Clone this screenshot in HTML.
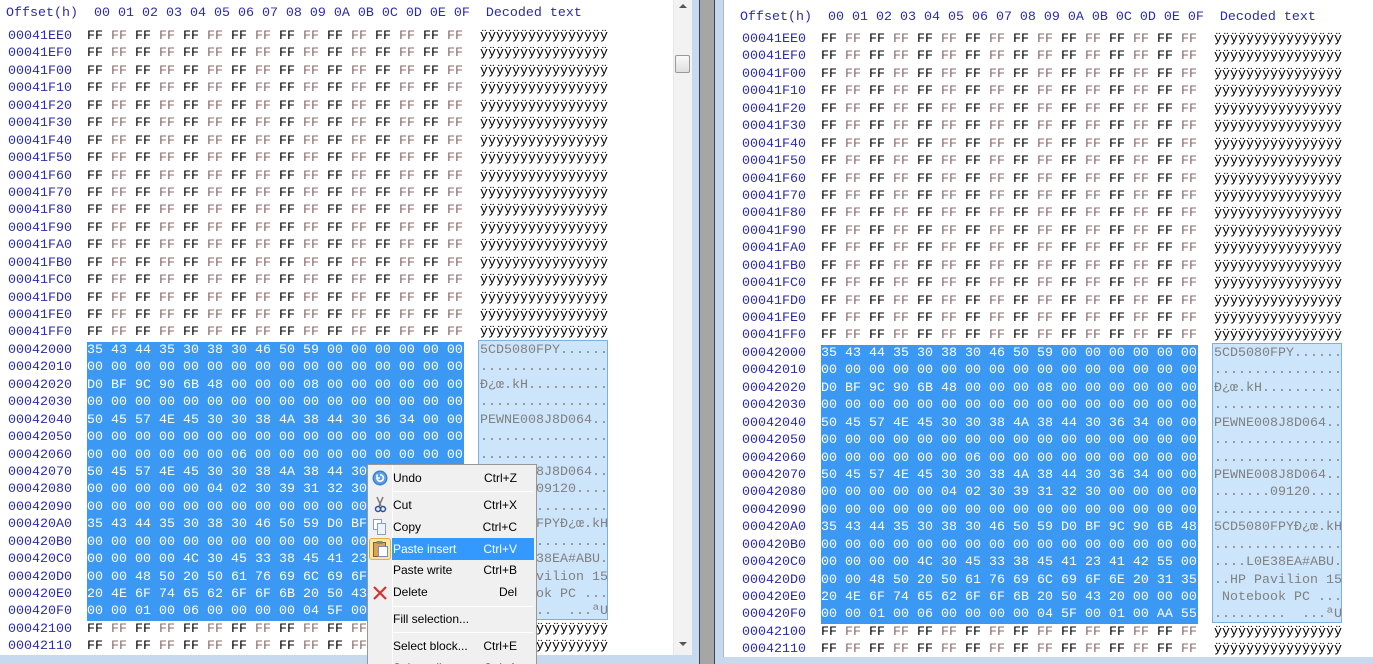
<!DOCTYPE html>
<html><head><meta charset="utf-8">
<style>
*{margin:0;padding:0;box-sizing:border-box}
html{width:1373px;height:664px;overflow:hidden}
body{width:1373px;height:664px;overflow:hidden;background:#c6d9ef;position:relative;font-family:"Liberation Mono",monospace;font-size:13.33px}
.pane{position:absolute;background:#fff;overflow:hidden}
.col{position:absolute;white-space:pre;line-height:17.43px}
.off{color:#2b2bae}
.hdr{position:absolute;white-space:pre;color:#2b2bae;line-height:17px}
.hex i{font-style:normal;color:#8a6a6a}
.hex .s{background:#3b99f4;color:#fff;width:377px;display:block}
.hex .s i{color:#fff}
.dec .s{color:#808080}
.box{position:absolute;background:#cde5fb;border:1px solid #7ab0e6}
.menu{position:absolute;left:367px;top:464px;width:170px;height:200px;overflow:hidden;background:#f0f0f0;border:1px solid #979797;border-bottom:none;font-family:"Liberation Sans",sans-serif;font-size:12px;color:#000}
.mi{position:absolute;left:25px;width:140px;height:21px;line-height:21px;padding-left:0}
.mi span{position:absolute;right:16px;top:0}
.sep{position:absolute;left:24px;width:142px;height:1px;background:#c8c8c8;border-bottom:1px solid #fff}
</style></head><body>

<!-- LEFT PANE -->
<div class="pane" style="left:0;top:0;width:673px;height:655px">
<div style="position:absolute;left:0;top:2px;width:673px;height:660px">
<div class="hdr" style="left:6px;top:3px">Offset(h)  00 01 02 03 04 05 06 07 08 09 0A 0B 0C 0D 0E 0F  Decoded text</div>
<div class="box" style="left:478px;top:338px;width:130px;height:280px"></div>
<div class="col off" style="left:8px;top:26px">00041EE0
00041EF0
00041F00
00041F10
00041F20
00041F30
00041F40
00041F50
00041F60
00041F70
00041F80
00041F90
00041FA0
00041FB0
00041FC0
00041FD0
00041FE0
00041FF0
00042000
00042010
00042020
00042030
00042040
00042050
00042060
00042070
00042080
00042090
000420A0
000420B0
000420C0
000420D0
000420E0
000420F0
00042100
00042110</div>
<div class="col hex" style="left:87px;top:26px">FF <i>FF</i> FF <i>FF</i> FF <i>FF</i> FF <i>FF</i> FF <i>FF</i> FF <i>FF</i> FF <i>FF</i> FF <i>FF</i>
FF <i>FF</i> FF <i>FF</i> FF <i>FF</i> FF <i>FF</i> FF <i>FF</i> FF <i>FF</i> FF <i>FF</i> FF <i>FF</i>
FF <i>FF</i> FF <i>FF</i> FF <i>FF</i> FF <i>FF</i> FF <i>FF</i> FF <i>FF</i> FF <i>FF</i> FF <i>FF</i>
FF <i>FF</i> FF <i>FF</i> FF <i>FF</i> FF <i>FF</i> FF <i>FF</i> FF <i>FF</i> FF <i>FF</i> FF <i>FF</i>
FF <i>FF</i> FF <i>FF</i> FF <i>FF</i> FF <i>FF</i> FF <i>FF</i> FF <i>FF</i> FF <i>FF</i> FF <i>FF</i>
FF <i>FF</i> FF <i>FF</i> FF <i>FF</i> FF <i>FF</i> FF <i>FF</i> FF <i>FF</i> FF <i>FF</i> FF <i>FF</i>
FF <i>FF</i> FF <i>FF</i> FF <i>FF</i> FF <i>FF</i> FF <i>FF</i> FF <i>FF</i> FF <i>FF</i> FF <i>FF</i>
FF <i>FF</i> FF <i>FF</i> FF <i>FF</i> FF <i>FF</i> FF <i>FF</i> FF <i>FF</i> FF <i>FF</i> FF <i>FF</i>
FF <i>FF</i> FF <i>FF</i> FF <i>FF</i> FF <i>FF</i> FF <i>FF</i> FF <i>FF</i> FF <i>FF</i> FF <i>FF</i>
FF <i>FF</i> FF <i>FF</i> FF <i>FF</i> FF <i>FF</i> FF <i>FF</i> FF <i>FF</i> FF <i>FF</i> FF <i>FF</i>
FF <i>FF</i> FF <i>FF</i> FF <i>FF</i> FF <i>FF</i> FF <i>FF</i> FF <i>FF</i> FF <i>FF</i> FF <i>FF</i>
FF <i>FF</i> FF <i>FF</i> FF <i>FF</i> FF <i>FF</i> FF <i>FF</i> FF <i>FF</i> FF <i>FF</i> FF <i>FF</i>
FF <i>FF</i> FF <i>FF</i> FF <i>FF</i> FF <i>FF</i> FF <i>FF</i> FF <i>FF</i> FF <i>FF</i> FF <i>FF</i>
FF <i>FF</i> FF <i>FF</i> FF <i>FF</i> FF <i>FF</i> FF <i>FF</i> FF <i>FF</i> FF <i>FF</i> FF <i>FF</i>
FF <i>FF</i> FF <i>FF</i> FF <i>FF</i> FF <i>FF</i> FF <i>FF</i> FF <i>FF</i> FF <i>FF</i> FF <i>FF</i>
FF <i>FF</i> FF <i>FF</i> FF <i>FF</i> FF <i>FF</i> FF <i>FF</i> FF <i>FF</i> FF <i>FF</i> FF <i>FF</i>
FF <i>FF</i> FF <i>FF</i> FF <i>FF</i> FF <i>FF</i> FF <i>FF</i> FF <i>FF</i> FF <i>FF</i> FF <i>FF</i>
FF <i>FF</i> FF <i>FF</i> FF <i>FF</i> FF <i>FF</i> FF <i>FF</i> FF <i>FF</i> FF <i>FF</i> FF <i>FF</i>
<b class="s" style="font-weight:normal">35 43 44 35 30 38 30 46 50 59 00 00 00 00 00 00
00 00 00 00 00 00 00 00 00 00 00 00 00 00 00 00
D0 BF 9C 90 6B 48 00 00 00 08 00 00 00 00 00 00
00 00 00 00 00 00 00 00 00 00 00 00 00 00 00 00
50 45 57 4E 45 30 30 38 4A 38 44 30 36 34 00 00
00 00 00 00 00 00 00 00 00 00 00 00 00 00 00 00
00 00 00 00 00 00 06 00 00 00 00 00 00 00 00 00
50 45 57 4E 45 30 30 38 4A 38 44 30 36 34 00 00
00 00 00 00 00 04 02 30 39 31 32 30 00 00 00 00
00 00 00 00 00 00 00 00 00 00 00 00 00 00 00 00
35 43 44 35 30 38 30 46 50 59 D0 BF 9C 90 6B 48
00 00 00 00 00 00 00 00 00 00 00 00 00 00 00 00
00 00 00 00 4C 30 45 33 38 45 41 23 41 42 55 00
00 00 48 50 20 50 61 76 69 6C 69 6F 6E 20 31 35
20 4E 6F 74 65 62 6F 6F 6B 20 50 43 20 00 00 00
00 00 01 00 06 00 00 00 00 04 5F 00 01 00 AA 55</b>FF <i>FF</i> FF <i>FF</i> FF <i>FF</i> FF <i>FF</i> FF <i>FF</i> FF <i>FF</i> FF <i>FF</i> FF <i>FF</i>
FF <i>FF</i> FF <i>FF</i> FF <i>FF</i> FF <i>FF</i> FF <i>FF</i> FF <i>FF</i> FF <i>FF</i> FF <i>FF</i></div>
<div class="col dec" style="left:480px;top:26px">ÿÿÿÿÿÿÿÿÿÿÿÿÿÿÿÿ
ÿÿÿÿÿÿÿÿÿÿÿÿÿÿÿÿ
ÿÿÿÿÿÿÿÿÿÿÿÿÿÿÿÿ
ÿÿÿÿÿÿÿÿÿÿÿÿÿÿÿÿ
ÿÿÿÿÿÿÿÿÿÿÿÿÿÿÿÿ
ÿÿÿÿÿÿÿÿÿÿÿÿÿÿÿÿ
ÿÿÿÿÿÿÿÿÿÿÿÿÿÿÿÿ
ÿÿÿÿÿÿÿÿÿÿÿÿÿÿÿÿ
ÿÿÿÿÿÿÿÿÿÿÿÿÿÿÿÿ
ÿÿÿÿÿÿÿÿÿÿÿÿÿÿÿÿ
ÿÿÿÿÿÿÿÿÿÿÿÿÿÿÿÿ
ÿÿÿÿÿÿÿÿÿÿÿÿÿÿÿÿ
ÿÿÿÿÿÿÿÿÿÿÿÿÿÿÿÿ
ÿÿÿÿÿÿÿÿÿÿÿÿÿÿÿÿ
ÿÿÿÿÿÿÿÿÿÿÿÿÿÿÿÿ
ÿÿÿÿÿÿÿÿÿÿÿÿÿÿÿÿ
ÿÿÿÿÿÿÿÿÿÿÿÿÿÿÿÿ
ÿÿÿÿÿÿÿÿÿÿÿÿÿÿÿÿ
<span class="s">5CD5080FPY......
................
Ð¿œ.kH..........
................
PEWNE008J8D064..
................
................
PEWNE008J8D064..
.......09120....
................
5CD5080FPYÐ¿œ.kH
................
....L0E38EA#ABU.
..HP Pavilion 15
 Notebook PC ...
.........  ...ªU</span>
ÿÿÿÿÿÿÿÿÿÿÿÿÿÿÿÿ
ÿÿÿÿÿÿÿÿÿÿÿÿÿÿÿÿ</div>
</div>
</div>

<!-- left scrollbar -->
<div style="position:absolute;left:673px;top:0;width:19px;height:655px;background:#f2f2f2;border-left:1px solid #e8e8e8"></div>
<div style="position:absolute;left:679px;top:4px;width:0;height:0;border-left:4px solid transparent;border-right:4px solid transparent;border-bottom:4px solid #555"></div>
<div style="position:absolute;left:675px;top:55px;width:15px;height:18px;background:linear-gradient(#fafafa,#dedede);border:1px solid #9a9a9a;border-radius:2px"></div>
<div style="position:absolute;left:679px;top:642px;width:0;height:0;border-left:4px solid transparent;border-right:4px solid transparent;border-top:4px solid #555"></div>

<!-- splitter -->
<div style="position:absolute;left:699px;top:0;width:16px;height:664px;background:#a6a6a6;border-left:1px solid #3a4656;border-right:1px solid #3a4656"></div>

<!-- RIGHT PANE -->
<div class="pane" style="left:723px;top:0;width:650px;height:657px;border-left:1px solid #aab8c8">
<div style="position:absolute;left:10px;top:5px;width:660px;height:660px">
<div class="hdr" style="left:6px;top:4px;position:absolute">Offset(h)  00 01 02 03 04 05 06 07 08 09 0A 0B 0C 0D 0E 0F  Decoded text</div>
<div class="box" style="left:478px;top:338px;width:130px;height:280px"></div>
<div class="col off" style="left:8px;top:26px">00041EE0
00041EF0
00041F00
00041F10
00041F20
00041F30
00041F40
00041F50
00041F60
00041F70
00041F80
00041F90
00041FA0
00041FB0
00041FC0
00041FD0
00041FE0
00041FF0
00042000
00042010
00042020
00042030
00042040
00042050
00042060
00042070
00042080
00042090
000420A0
000420B0
000420C0
000420D0
000420E0
000420F0
00042100
00042110</div>
<div class="col hex" style="left:87px;top:26px">FF <i>FF</i> FF <i>FF</i> FF <i>FF</i> FF <i>FF</i> FF <i>FF</i> FF <i>FF</i> FF <i>FF</i> FF <i>FF</i>
FF <i>FF</i> FF <i>FF</i> FF <i>FF</i> FF <i>FF</i> FF <i>FF</i> FF <i>FF</i> FF <i>FF</i> FF <i>FF</i>
FF <i>FF</i> FF <i>FF</i> FF <i>FF</i> FF <i>FF</i> FF <i>FF</i> FF <i>FF</i> FF <i>FF</i> FF <i>FF</i>
FF <i>FF</i> FF <i>FF</i> FF <i>FF</i> FF <i>FF</i> FF <i>FF</i> FF <i>FF</i> FF <i>FF</i> FF <i>FF</i>
FF <i>FF</i> FF <i>FF</i> FF <i>FF</i> FF <i>FF</i> FF <i>FF</i> FF <i>FF</i> FF <i>FF</i> FF <i>FF</i>
FF <i>FF</i> FF <i>FF</i> FF <i>FF</i> FF <i>FF</i> FF <i>FF</i> FF <i>FF</i> FF <i>FF</i> FF <i>FF</i>
FF <i>FF</i> FF <i>FF</i> FF <i>FF</i> FF <i>FF</i> FF <i>FF</i> FF <i>FF</i> FF <i>FF</i> FF <i>FF</i>
FF <i>FF</i> FF <i>FF</i> FF <i>FF</i> FF <i>FF</i> FF <i>FF</i> FF <i>FF</i> FF <i>FF</i> FF <i>FF</i>
FF <i>FF</i> FF <i>FF</i> FF <i>FF</i> FF <i>FF</i> FF <i>FF</i> FF <i>FF</i> FF <i>FF</i> FF <i>FF</i>
FF <i>FF</i> FF <i>FF</i> FF <i>FF</i> FF <i>FF</i> FF <i>FF</i> FF <i>FF</i> FF <i>FF</i> FF <i>FF</i>
FF <i>FF</i> FF <i>FF</i> FF <i>FF</i> FF <i>FF</i> FF <i>FF</i> FF <i>FF</i> FF <i>FF</i> FF <i>FF</i>
FF <i>FF</i> FF <i>FF</i> FF <i>FF</i> FF <i>FF</i> FF <i>FF</i> FF <i>FF</i> FF <i>FF</i> FF <i>FF</i>
FF <i>FF</i> FF <i>FF</i> FF <i>FF</i> FF <i>FF</i> FF <i>FF</i> FF <i>FF</i> FF <i>FF</i> FF <i>FF</i>
FF <i>FF</i> FF <i>FF</i> FF <i>FF</i> FF <i>FF</i> FF <i>FF</i> FF <i>FF</i> FF <i>FF</i> FF <i>FF</i>
FF <i>FF</i> FF <i>FF</i> FF <i>FF</i> FF <i>FF</i> FF <i>FF</i> FF <i>FF</i> FF <i>FF</i> FF <i>FF</i>
FF <i>FF</i> FF <i>FF</i> FF <i>FF</i> FF <i>FF</i> FF <i>FF</i> FF <i>FF</i> FF <i>FF</i> FF <i>FF</i>
FF <i>FF</i> FF <i>FF</i> FF <i>FF</i> FF <i>FF</i> FF <i>FF</i> FF <i>FF</i> FF <i>FF</i> FF <i>FF</i>
FF <i>FF</i> FF <i>FF</i> FF <i>FF</i> FF <i>FF</i> FF <i>FF</i> FF <i>FF</i> FF <i>FF</i> FF <i>FF</i>
<b class="s" style="font-weight:normal">35 43 44 35 30 38 30 46 50 59 00 00 00 00 00 00
00 00 00 00 00 00 00 00 00 00 00 00 00 00 00 00
D0 BF 9C 90 6B 48 00 00 00 08 00 00 00 00 00 00
00 00 00 00 00 00 00 00 00 00 00 00 00 00 00 00
50 45 57 4E 45 30 30 38 4A 38 44 30 36 34 00 00
00 00 00 00 00 00 00 00 00 00 00 00 00 00 00 00
00 00 00 00 00 00 06 00 00 00 00 00 00 00 00 00
50 45 57 4E 45 30 30 38 4A 38 44 30 36 34 00 00
00 00 00 00 00 04 02 30 39 31 32 30 00 00 00 00
00 00 00 00 00 00 00 00 00 00 00 00 00 00 00 00
35 43 44 35 30 38 30 46 50 59 D0 BF 9C 90 6B 48
00 00 00 00 00 00 00 00 00 00 00 00 00 00 00 00
00 00 00 00 4C 30 45 33 38 45 41 23 41 42 55 00
00 00 48 50 20 50 61 76 69 6C 69 6F 6E 20 31 35
20 4E 6F 74 65 62 6F 6F 6B 20 50 43 20 00 00 00
00 00 01 00 06 00 00 00 00 04 5F 00 01 00 AA 55</b>FF <i>FF</i> FF <i>FF</i> FF <i>FF</i> FF <i>FF</i> FF <i>FF</i> FF <i>FF</i> FF <i>FF</i> FF <i>FF</i>
FF <i>FF</i> FF <i>FF</i> FF <i>FF</i> FF <i>FF</i> FF <i>FF</i> FF <i>FF</i> FF <i>FF</i> FF <i>FF</i></div>
<div class="col dec" style="left:480px;top:26px">ÿÿÿÿÿÿÿÿÿÿÿÿÿÿÿÿ
ÿÿÿÿÿÿÿÿÿÿÿÿÿÿÿÿ
ÿÿÿÿÿÿÿÿÿÿÿÿÿÿÿÿ
ÿÿÿÿÿÿÿÿÿÿÿÿÿÿÿÿ
ÿÿÿÿÿÿÿÿÿÿÿÿÿÿÿÿ
ÿÿÿÿÿÿÿÿÿÿÿÿÿÿÿÿ
ÿÿÿÿÿÿÿÿÿÿÿÿÿÿÿÿ
ÿÿÿÿÿÿÿÿÿÿÿÿÿÿÿÿ
ÿÿÿÿÿÿÿÿÿÿÿÿÿÿÿÿ
ÿÿÿÿÿÿÿÿÿÿÿÿÿÿÿÿ
ÿÿÿÿÿÿÿÿÿÿÿÿÿÿÿÿ
ÿÿÿÿÿÿÿÿÿÿÿÿÿÿÿÿ
ÿÿÿÿÿÿÿÿÿÿÿÿÿÿÿÿ
ÿÿÿÿÿÿÿÿÿÿÿÿÿÿÿÿ
ÿÿÿÿÿÿÿÿÿÿÿÿÿÿÿÿ
ÿÿÿÿÿÿÿÿÿÿÿÿÿÿÿÿ
ÿÿÿÿÿÿÿÿÿÿÿÿÿÿÿÿ
ÿÿÿÿÿÿÿÿÿÿÿÿÿÿÿÿ
<span class="s">5CD5080FPY......
................
Ð¿œ.kH..........
................
PEWNE008J8D064..
................
................
PEWNE008J8D064..
.......09120....
................
5CD5080FPYÐ¿œ.kH
................
....L0E38EA#ABU.
..HP Pavilion 15
 Notebook PC ...
.........  ...ªU</span>
ÿÿÿÿÿÿÿÿÿÿÿÿÿÿÿÿ
ÿÿÿÿÿÿÿÿÿÿÿÿÿÿÿÿ</div>
</div>
</div>

<!-- CONTEXT MENU -->
<div class="menu">
<div style="position:absolute;left:24px;top:0;width:1px;height:210px;background:#e2e2e2;border-right:1px solid #fff"></div>
<svg style="position:absolute;left:4px;top:5px" width="16" height="16"><circle cx="8" cy="8" r="7.5" fill="#3a7fd0"/><circle cx="8" cy="8" r="6" fill="#5ea0ea"/><path d="M5 8 a3.2 3.2 0 1 0 3-3.2 M5 4.5 v3.5 h3" stroke="#fff" stroke-width="1.6" fill="none"/></svg>
<div class="mi" style="top:3px">Undo<span>Ctrl+Z</span></div>
<div class="sep" style="top:26px"></div>
<svg style="position:absolute;left:4px;top:31px" width="16" height="18"><path d="M5 1 L9 10 M11 1 L7 10" stroke="#777" stroke-width="1.5"/><circle cx="6" cy="13" r="2.5" fill="none" stroke="#2a4fa0" stroke-width="1.5"/><circle cx="11" cy="13" r="2.5" fill="none" stroke="#2a4fa0" stroke-width="1.5"/></svg>
<div class="mi" style="top:30px">Cut<span>Ctrl+X</span></div>
<svg style="position:absolute;left:4px;top:53px" width="16" height="18"><rect x="1.5" y="1.5" width="8" height="10" fill="#fff" stroke="#8aa0c0"/><rect x="5.5" y="5.5" width="8" height="11" fill="#eef3fa" stroke="#8aa0c0"/></svg>
<div class="mi" style="top:52px">Copy<span>Ctrl+C</span></div>
<div style="position:absolute;left:1px;top:73px;width:22px;height:22px;background:#fbe6a8;border:1px solid #e0b040;border-radius:3px"></div>
<svg style="position:absolute;left:4px;top:75px" width="18" height="18"><rect x="1.5" y="2.5" width="12" height="14" fill="#d6a650" stroke="#8a6020"/><rect x="4.5" y="1" width="6" height="3" fill="#888"/><rect x="6.5" y="6.5" width="9" height="10" fill="#fff" stroke="#7890b0"/></svg>
<div style="position:absolute;left:24px;top:73px;width:142px;height:22px;background:#3399ff"></div>
<div class="mi" style="top:74px;color:#fff">Paste insert<span>Ctrl+V</span></div>
<div class="mi" style="top:95px">Paste write<span>Ctrl+B</span></div>
<svg style="position:absolute;left:4px;top:120px" width="16" height="16"><path d="M2 2 L14 14 M14 2 L2 14" stroke="#d83030" stroke-width="2.2"/></svg>
<div class="mi" style="top:117px">Delete<span>Del</span></div>
<div class="sep" style="top:141px"></div>
<div class="mi" style="top:144px">Fill selection...</div>
<div class="sep" style="top:167px"></div>
<div class="mi" style="top:171px">Select block...<span>Ctrl+E</span></div>
<div class="mi" style="top:193px">Select all<span>Ctrl+A</span></div>
</div>

</body></html>
